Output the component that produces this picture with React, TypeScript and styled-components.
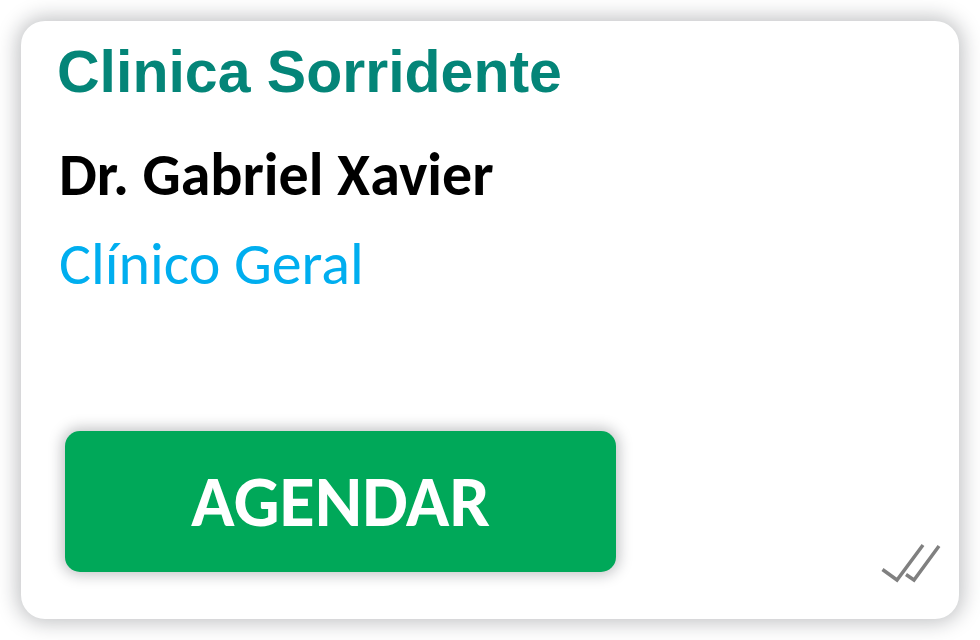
import React from "react";
import styled, { createGlobalStyle } from "styled-components";

const GlobalStyle = createGlobalStyle`
  * { box-sizing: border-box; }
  body { margin: 0; background: #fff; }
`;

const Page = styled.main`
  display: flex;
  min-height: 100vh;
  padding: 21px;
`;

const Card = styled.article`
  flex: 1;
  display: flex;
  flex-direction: column;
  padding: 18px 18px 34px 36px;
  border-radius: 24px;
  background: #fff;
  box-shadow: 0 0 20px 4px rgba(20, 24, 32, 0.26);
`;

const Clinic = styled.h1`
  margin: 0;
  color: #048578;
  font: 700 59px/66px "Liberation Sans", Arial, sans-serif;
`;

const Doctor = styled.h2`
  margin: 37px 0 0 2px;
  color: #000;
  font: 700 60px/66px Carlito, Calibri, Lato, sans-serif;
`;

const Specialty = styled.p`
  margin: 23px 0 0 2px;
  color: #00aeef;
  font: 400 60px/66px Carlito, Calibri, Lato, sans-serif;
`;

const Footer = styled.footer`
  display: flex;
  justify-content: space-between;
  align-items: flex-end;
  margin-top: auto;
  padding-left: 8px;
`;

const ScheduleButton = styled.button`
  width: 551px;
  margin: 0 0 13px;
  padding: 28px 0 29px;
  border: 0;
  border-radius: 15px;
  background: #00a859;
  color: #fff;
  box-shadow: 0 0 14px 3px rgba(20, 24, 32, 0.26);
  font: 700 72px/84px Carlito, Calibri, Lato, sans-serif;
  cursor: pointer;
`;

const ReadMark = styled.svg`
  flex: none;
  width: 60px;
  height: 42px;
`;

export default function App() {
  return (
    <>
      <GlobalStyle />
      <Page>
        <Card>
          <Clinic>Clinica Sorridente</Clinic>
          <Doctor>Dr. Gabriel Xavier</Doctor>
          <Specialty>Clínico Geral</Specialty>
          <Footer>
            <ScheduleButton type="button">AGENDAR</ScheduleButton>
            <ReadMark viewBox="0 0 60 42" fill="none" stroke="#808080" strokeWidth="3.5" aria-hidden="true">
              <path d="M1.5 26.5 16 37 42 2M25 31.5 33 37 58 3" />
            </ReadMark>
          </Footer>
        </Card>
      </Page>
    </>
  );
}
